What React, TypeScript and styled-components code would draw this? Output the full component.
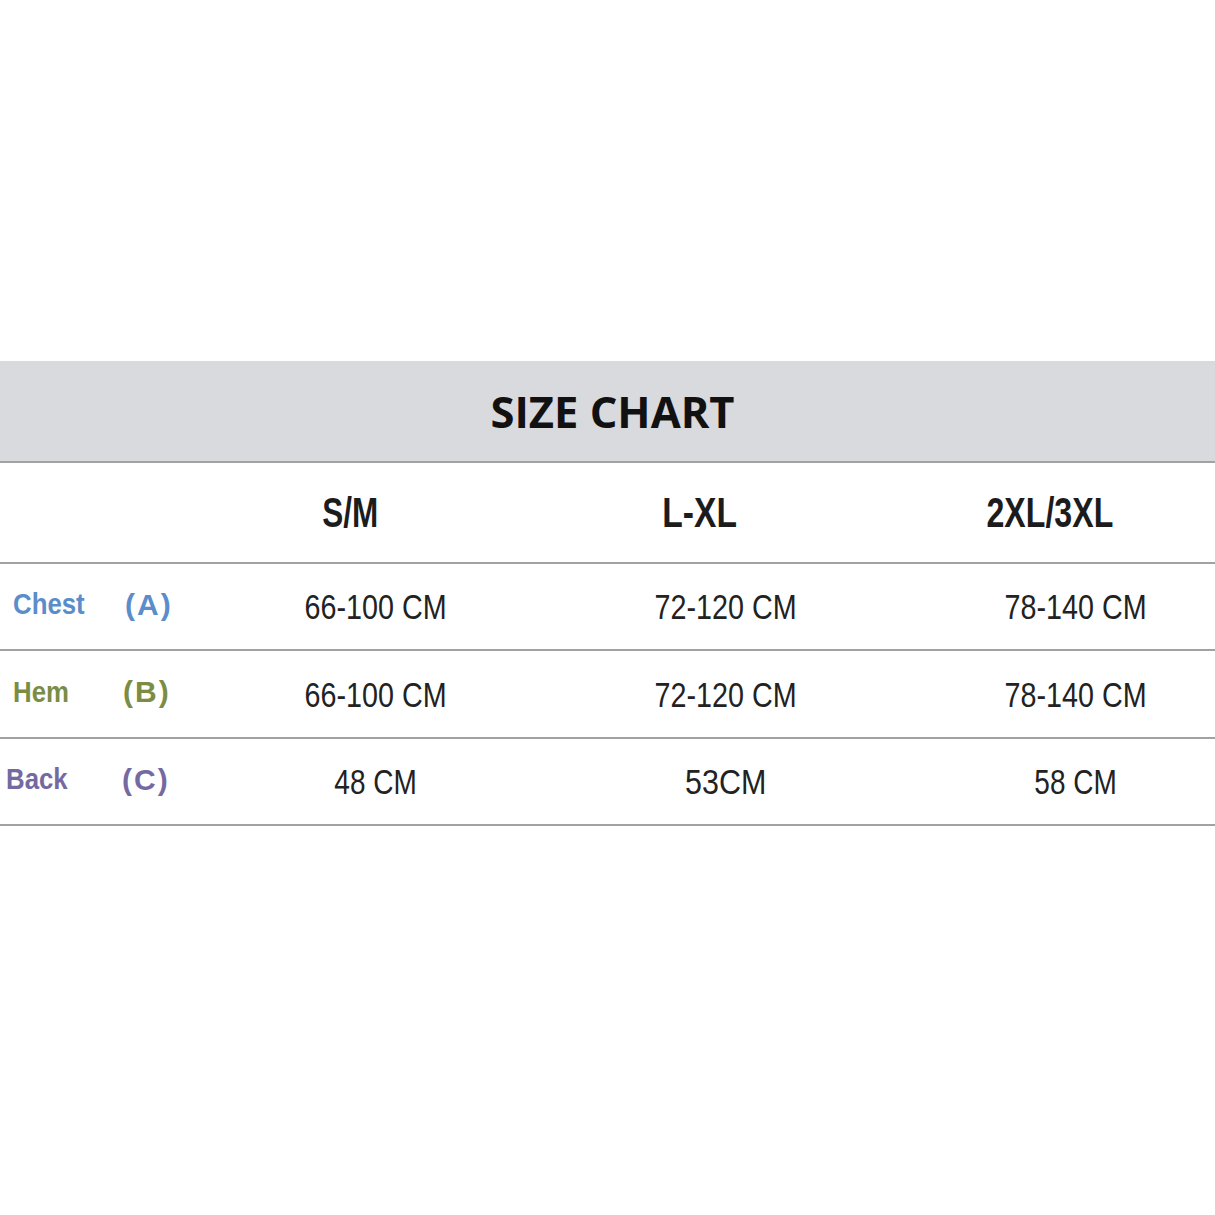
import React from "react";
import styled, { createGlobalStyle } from "styled-components";

const Global = createGlobalStyle`
  html, body { margin: 0; padding: 0; background: #ffffff; }
  body { font-family: "Liberation Sans", Arial, sans-serif; }
`;

const Page = styled.div`
  width: 1215px;
  height: 1215px;
  padding-top: 361px;
  box-sizing: border-box;
  overflow: hidden;
  background: #ffffff;
`;

const TitleBar = styled.div`
  height: 100px;
  background: #d9dadd;
  border-bottom: 2px solid #a2a2a2;
  display: flex;
  align-items: center;
  justify-content: center;
`;

const Title = styled.h1`
  margin: 0;
  font-family: "Open Sans", "Liberation Sans", sans-serif;
  font-weight: 700;
  font-size: 43.5px;
  color: #111111;
  padding-left: 10px;
`;

const Row = styled.div<{ $h: number }>`
  height: ${(p) => p.$h}px;
  border-bottom: 2px solid #a2a2a2;
  display: grid;
  grid-template-columns: 166px repeat(3, 280px);
  column-gap: 70px;
  align-items: center;
`;

const Cell = styled.div<{ $shift?: number }>`
  display: flex;
  justify-content: center;
  align-items: center;
  margin-right: ${(p) => (p.$shift ? p.$shift * 2 : 0)}px;
`;

const Squeeze = styled.span<{ $sx: number }>`
  display: inline-block;
  transform: scaleX(${(p) => p.$sx});
  white-space: nowrap;
`;

const SizeText = styled(Squeeze)`
  font-family: "Liberation Sans", Arial, sans-serif;
  font-weight: 700;
  font-size: 42px;
  color: #1c1c1c;
  line-height: 1;
`;

const ValueText = styled(Squeeze)`
  font-family: "Liberation Sans", Arial, sans-serif;
  font-weight: 400;
  font-size: 35px;
  color: #222222;
  line-height: 1;
`;

const LabelCell = styled.div<{ $pad: number }>`
  display: flex;
  align-items: center;
  padding-left: ${(p) => p.$pad}px;
  margin-top: -4px;
  overflow: visible;
`;

const LabelName = styled.span<{ $color: string; $w: number }>`
  display: inline-block;
  flex: 0 0 ${(p) => p.$w}px;
  width: ${(p) => p.$w}px;
  font-family: "Liberation Sans", Arial, sans-serif;
  font-weight: 700;
  font-size: 29px;
  color: ${(p) => p.$color};
  transform: scaleX(0.89);
  transform-origin: left center;
  white-space: nowrap;
  line-height: 1;
`;

const LabelCode = styled.span<{ $color: string }>`
  display: inline-block;
  flex: 0 0 auto;
  font-family: "Liberation Sans", Arial, sans-serif;
  font-weight: 700;
  font-size: 30px;
  letter-spacing: 2px;
  color: ${(p) => p.$color};
  white-space: nowrap;
  line-height: 1;
`;

const sizes = [
  { t: "S/M", sx: 0.75 },
  { t: "L-XL", sx: 0.8 },
  { t: "2XL/3XL", sx: 0.765 },
];

type Measure = {
  name: string;
  code: string;
  color: string;
  pad: number;
  nameW: number;
  h: number;
  values: { t: string; sx: number }[];
};

const rows: Measure[] = [
  {
    name: "Chest",
    code: "(A)",
    color: "#5b8dcb",
    pad: 13,
    nameW: 112,
    h: 85,
    values: [
      { t: "66-100 CM", sx: 0.82 },
      { t: "72-120 CM", sx: 0.82 },
      { t: "78-140 CM", sx: 0.82 },
    ],
  },
  {
    name: "Hem",
    code: "(B)",
    color: "#7b8d45",
    pad: 13,
    nameW: 110,
    h: 86,
    values: [
      { t: "66-100 CM", sx: 0.82 },
      { t: "72-120 CM", sx: 0.82 },
      { t: "78-140 CM", sx: 0.82 },
    ],
  },
  {
    name: "Back",
    code: "(C)",
    color: "#7569a1",
    pad: 6,
    nameW: 116,
    h: 85,
    values: [
      { t: "48 CM", sx: 0.8 },
      { t: "53CM", sx: 0.87 },
      { t: "58 CM", sx: 0.8 },
    ],
  },
];

export default function App() {
  return (
    <Page>
      <Global />
      <TitleBar>
        <Title>SIZE CHART</Title>
      </TitleBar>
      <Row $h={99}>
        <div />
        {sizes.map((s) => (
          <Cell key={s.t} $shift={26}>
            <SizeText $sx={s.sx}>{s.t}</SizeText>
          </Cell>
        ))}
      </Row>
      {rows.map((r) => (
        <Row key={r.name} $h={r.h}>
          <LabelCell $pad={r.pad}>
            <LabelName $color={r.color} $w={r.nameW}>
              {r.name}
            </LabelName>
            <LabelCode $color={r.color}>{r.code}</LabelCode>
          </LabelCell>
          {r.values.map((v, i) => (
            <Cell key={i}>
              <ValueText $sx={v.sx}>{v.t}</ValueText>
            </Cell>
          ))}
        </Row>
      ))}
    </Page>
  );
}
